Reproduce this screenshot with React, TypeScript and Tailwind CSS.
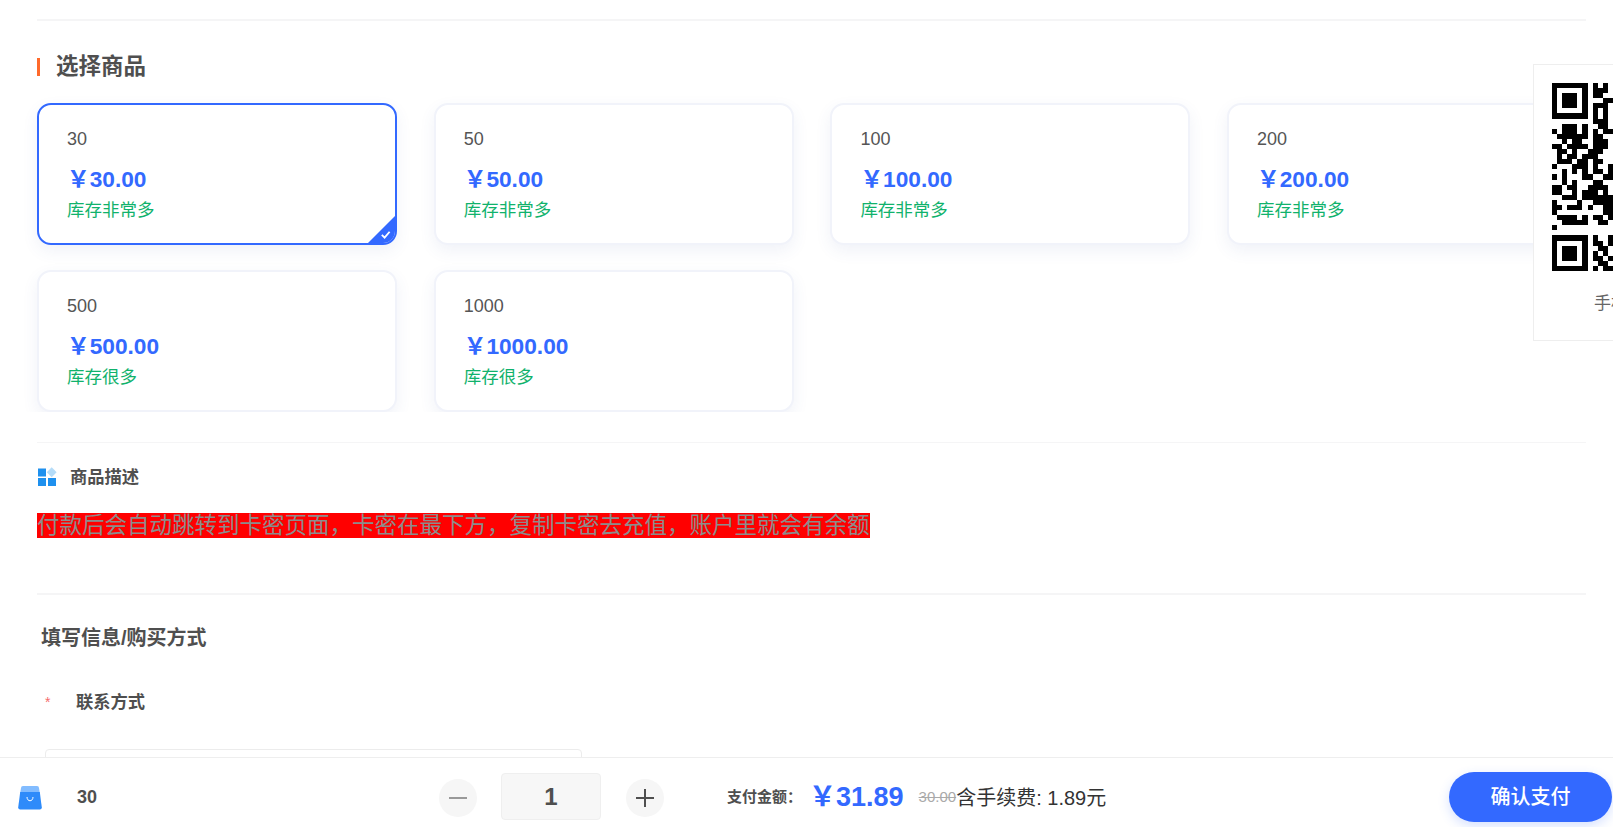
const font = 'font-["Liberation_Sans","Noto_Sans_CJK_SC",sans-serif]';

const products = [
  { name: '30', price: '30.00', stock: '库存非常多', selected: true },
  { name: '50', price: '50.00', stock: '库存非常多' },
  { name: '100', price: '100.00', stock: '库存非常多' },
  { name: '200', price: '200.00', stock: '库存非常多' },
  { name: '500', price: '500.00', stock: '库存很多' },
  { name: '1000', price: '1000.00', stock: '库存很多' },
];

// only the part of the code that is on screen
const qrRows = [
  '111111101010',
  '100000101110',
  '101110101100',
  '101110100011',
  '101110101110',
  '100000101010',
  '111111101010',
  '000000001110',
  '001110100110',
  '101110101011',
  '011111101100',
  '001011001110',
  '110111101110',
  '011010011100',
  '010110111000',
  '011101101100',
  '100011101001',
  '001010101101',
  '101000110011',
  '001010001100',
  '110110011110',
  '110010111010',
  '001110111111',
  '100001001111',
  '110111010011',
  '100000000011',
  '011110101101',
  '001111100110',
  '100000000000',
  '000000000000',
  '111111101001',
  '100000101101',
  '101110100110',
  '101110101010',
  '101110101101',
  '100000100110',
  '111111101011',
];

function ProductCard({ name, price, stock, selected }: { name: string; price: string; stock: string; selected?: boolean }) {
  return (
    <div
      className={`relative h-[142px] overflow-hidden rounded-[14px] border-2 bg-white pl-[28px] pt-[22px] shadow-[0_6px_16px_rgba(60,90,160,0.08)] ${
        selected ? 'border-[#3369ff]' : 'border-[#f1f3fa]'
      }`}
    >
      <div className="text-[18px] leading-[24px] text-[#555]">{name}</div>
      <div className="mt-[14px] text-[22.7px] font-bold leading-[28px] text-[#3369ff]">￥{price}</div>
      <div className="mt-[5px] text-[17.5px] leading-[24px] text-[#10b26c]">{stock}</div>
      {selected && (
        <>
          <div className="absolute bottom-0 right-0 h-0 w-0 border-b-[27px] border-l-[27px] border-b-[#3369ff] border-l-transparent" />
          <svg className="absolute bottom-[3px] right-[4px]" width="11" height="11" viewBox="0 0 12 12" fill="none">
            <path d="M2 6.5 5 9.5 10.5 3" stroke="#fff" strokeWidth="2" />
          </svg>
        </>
      )}
    </div>
  );
}

function Divider() {
  return <div className="h-[1.5px] w-[1549px] bg-[#f5f5f6]" />;
}

export default function App() {
  return (
    <div className={`relative h-[827px] w-[1613px] overflow-hidden bg-white ${font}`}>
      <div className="pl-[37px] pt-[19px]">
        <Divider />

        <div className="mt-[34px] flex h-[24px] items-center">
          <div className="h-[18px] w-[3px] bg-[#ff6a2b]" />
          <h2 className="ml-[16px] text-[22.5px] font-bold leading-[24px] text-[#4f4f4f]">选择商品</h2>
        </div>

        {/* second row is cut by this box in the reference too */}
        <div className="-ml-[16px] mt-[4px] h-[329px] overflow-hidden pl-[16px] pt-[20px]">
          <div className="grid grid-cols-[repeat(4,360px)] gap-x-[36.7px] gap-y-[25px]">
            {products.map((p) => (
              <ProductCard key={p.name} {...p} />
            ))}
          </div>
        </div>

        <div className="mt-[30px]">
          <Divider />
        </div>

        <div className="mt-[23px] flex h-[22px] items-center">
          <svg width="20" height="20" viewBox="0 0 20 20">
            <rect x="1" y="1.5" width="8" height="8" fill="#1e90ee" />
            <rect x="1" y="11" width="8" height="8" fill="#1e90ee" />
            <rect x="11" y="11" width="8" height="8" fill="#1e90ee" />
            <rect x="11.2" y="1.7" width="7" height="7" fill="#b5dcf8" transform="rotate(45 14.7 5.2)" />
          </svg>
          <h3 className="ml-[13px] text-[17.3px] font-bold leading-[22px] text-[#4f4f4f]">商品描述</h3>
        </div>

        <p className="mt-[25px] text-[22.5px] leading-[25px]">
          <span className="inline-block bg-[#ff0000] text-[#8c8c8c]">
            付款后会自动跳转到卡密页面，卡密在最下方，复制卡密去充值，账户里就会有余额
          </span>
        </p>

        <div className="mt-[55px]">
          <Divider />
        </div>

        <h3 className="ml-[4px] mt-[30px] text-[20px] font-bold leading-[26px] text-[#4f4f4f]">填写信息/购买方式</h3>

        <div className="mt-[40px] flex h-[24px] items-center">
          <span className="ml-[8px] w-[31px] text-[14px] text-[#f56c6c]">*</span>
          <span className="text-[17.3px] font-bold text-[#4f4f4f]">联系方式</span>
        </div>

        <div className="ml-[8px] mt-[34px] h-[60px] w-[537px] rounded-[4px] border border-[#ececec]" />
      </div>

      {/* qr box sticks out of the window on the right */}
      <div className="absolute left-[1533px] top-[64px] h-[277px] w-[240px] border border-[#eeeeee] bg-white pl-[18px] pt-[18px]">
        <svg width="188" height="188" viewBox="0 0 37 37" shapeRendering="crispEdges">
          {qrRows.map((row, y) =>
            row.split('').map((c, x) => (c === '1' ? <rect key={`${x}-${y}`} x={x} y={y} width="1" height="1" fill="#000" /> : null)),
          )}
        </svg>
        <div className="ml-[42px] mt-[21px] whitespace-nowrap text-[17px] leading-[24px] text-[#666]">手机扫码购买</div>
      </div>

      {/* fixed pay bar */}
      <div className="absolute bottom-0 left-0 flex h-[70px] w-full items-center border-t border-[#eeeeee] bg-white pt-[10px]">
        <svg className="ml-[18px]" width="24" height="25" viewBox="0 0 24 25">
          <path d="M5 1h14a2 2 0 0 1 2 2l1 6H2l1-6a2 2 0 0 1 2-2z" fill="#82bcff" />
          <path d="M2.2 7h19.6l2 15.5a2 2 0 0 1-2 2H2.2a2 2 0 0 1-2-2z" fill="#2e8bfa" />
          <path d="M9 12c0 5 6 5 6 0" stroke="#fff" strokeWidth="1" fill="none" />
        </svg>
        <span className="ml-[35px] w-[362px] text-[18px] font-bold text-[#4f4f4f]">30</span>

        <button className="flex h-[38px] w-[38px] items-center justify-center rounded-full bg-[#f6f6f6]">
          <span className="h-[2px] w-[18px] bg-[#999]" />
        </button>
        <div className="relative -top-[1px] ml-[24px] flex h-[47px] w-[100px] items-center justify-center rounded-[4px] border border-[#efefef] bg-[#f7f7f7] text-[24px] font-bold text-[#4f4f4f]">
          1
        </div>
        <button className="relative ml-[25px] flex h-[38px] w-[38px] items-center justify-center rounded-full bg-[#f6f6f6]">
          <span className="h-[2px] w-[18px] bg-[#4f4f4f]" />
          <span className="absolute h-[18px] w-[2px] bg-[#4f4f4f]" />
        </button>

        <span className="ml-[63px] text-[15px] font-bold text-[#4f4f4f]">支付金额：</span>
        <span className="ml-[7px] text-[27px] font-bold text-[#3369ff]">￥31.89</span>
        <span className="ml-[15px] text-[15px] text-[#aaa] line-through">30.00</span>
        <span className="text-[20px] text-[#333]">含手续费: 1.89元</span>

        <button className="absolute left-[1449px] top-[14px] h-[50px] w-[163px] rounded-[25px] bg-[#3369ff] text-[20px] font-medium text-white shadow-[0_4px_12px_rgba(51,105,255,0.2)]">
          确认支付
        </button>
      </div>
    </div>
  );
}
